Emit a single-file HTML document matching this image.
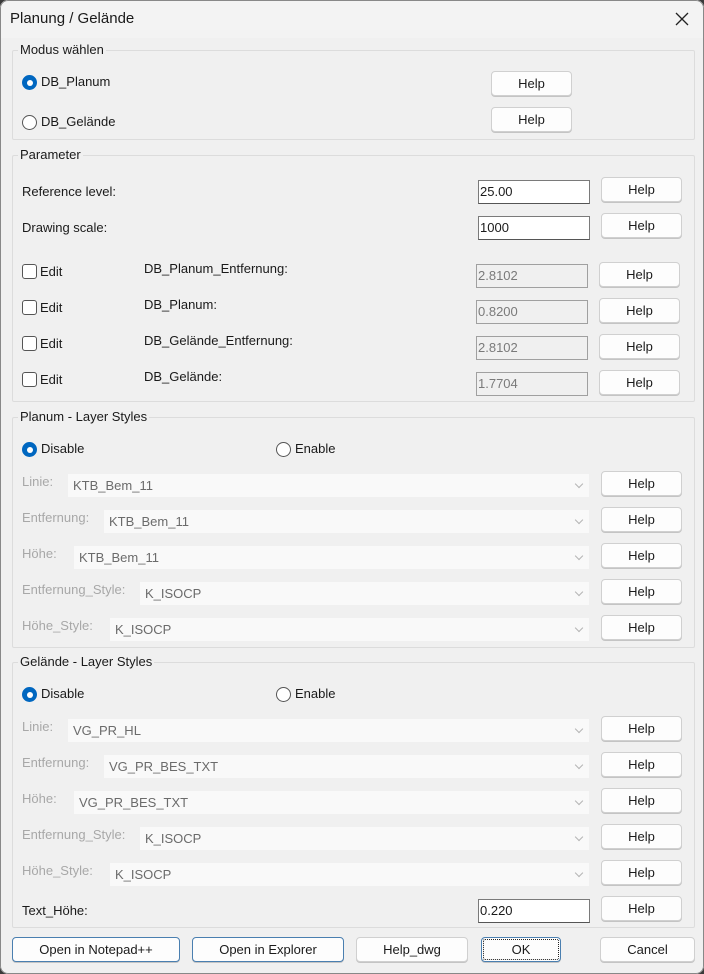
<!DOCTYPE html>
<html><head><meta charset="utf-8"><style>
*{box-sizing:border-box;margin:0;padding:0}
body{width:704px;height:974px;background:#3a3a3a;font-family:"Liberation Sans",sans-serif;font-size:13px;color:#1a1a1a;overflow:hidden;position:relative}
.win{position:absolute;left:0;top:0;width:704px;height:974px;background:#f0f0f0;border-radius:8px;overflow:hidden}
.frame{position:absolute;left:0;top:0;width:704px;height:974px;border-radius:8px;border:1px solid #888;pointer-events:none}
.a{position:absolute;white-space:nowrap}
.t{line-height:16px;transform:translateY(-8px)}
.grp{position:absolute;border:1px solid #dcdcdc;border-radius:2px}
.gl{position:absolute;background:#f0f0f0;padding:0 2px;line-height:16px;transform:translateY(-8px)}
.btn{position:absolute;background:#fdfdfd;border:1px solid #d0d0d0;border-radius:4px;text-align:center;line-height:23px;width:81px;height:25px;box-shadow:0 1px 0 #c4c4c4}
.in{position:absolute;background:#fff;border:1px solid #7a7a7a;border-bottom:1px solid #555;height:24px;line-height:22px;padding-left:1px;width:112px}
.dis{background:#f0f0f0;border:1px solid #a0a0a0;color:#7a7a7a}
.rad{position:absolute;width:15px;height:15px;border-radius:50%;border:1px solid #555;background:#fff}
.rad.on{background:#0067c0;border-color:#0067c0}
.rad.on:after{content:"";position:absolute;left:3.5px;top:3.5px;width:6px;height:6px;border-radius:50%;background:#fff}
.cb{position:absolute;width:15px;height:15px;border:1px solid #555;border-radius:3px;background:#fff}
.cmb{position:absolute;background:#f9f9f9;height:23px;line-height:23px;padding-left:5px;color:#6b6b6b}
.cmb:after{content:"";position:absolute;right:7px;top:7px;width:5px;height:5px;border-right:1px solid #b5b5b5;border-bottom:1px solid #b5b5b5;transform:rotate(45deg)}
.gr{color:#a8a8a8}
</style></head><body><div class="win">
<div class="a" style="left:0;top:0;width:704px;height:38px;background:#f3f3f3"></div>
<div class="a t" style="left:10px;top:19px;font-size:15px">Planung / Gelände</div>
<svg class="a" style="left:675px;top:12px" width="14" height="14"><path d="M1 1L13 13M13 1L1 13" stroke="#222" stroke-width="1.3"/></svg>

<div class="grp" style="left:12px;top:50px;width:683px;height:90px"></div>
<div class="gl" style="left:18px;top:50px">Modus wählen</div>
<div class="rad on" style="left:22px;top:75px"></div><div class="a t" style="left:41px;top:82px">DB_Planum</div>
<div class="rad" style="left:22px;top:115px"></div><div class="a t" style="left:41px;top:122px">DB_Gelände</div>
<div class="btn" style="left:491px;top:71px">Help</div>
<div class="btn" style="left:491px;top:107px">Help</div>

<div class="grp" style="left:12px;top:155px;width:683px;height:247px"></div>
<div class="gl" style="left:18px;top:155px">Parameter</div>
<div class="a t" style="left:22px;top:192px">Reference level:</div>
<div class="in" style="left:478px;top:180px">25.00</div>
<div class="btn" style="left:601px;top:177px">Help</div>
<div class="a t" style="left:22px;top:228px">Drawing scale:</div>
<div class="in" style="left:478px;top:216px">1000</div>
<div class="btn" style="left:601px;top:213px">Help</div>

<div class="cb" style="left:22px;top:264px"></div><div class="a t" style="left:40px;top:272px">Edit</div><div class="a t" style="left:144px;top:269px">DB_Planum_Entfernung:</div><div class="in dis" style="left:476px;top:264px">2.8102</div><div class="btn" style="left:599px;top:262px">Help</div>
<div class="cb" style="left:22px;top:300px"></div><div class="a t" style="left:40px;top:308px">Edit</div><div class="a t" style="left:144px;top:305px">DB_Planum:</div><div class="in dis" style="left:476px;top:300px">0.8200</div><div class="btn" style="left:599px;top:298px">Help</div>
<div class="cb" style="left:22px;top:336px"></div><div class="a t" style="left:40px;top:344px">Edit</div><div class="a t" style="left:144px;top:341px">DB_Gelände_Entfernung:</div><div class="in dis" style="left:476px;top:336px">2.8102</div><div class="btn" style="left:599px;top:334px">Help</div>
<div class="cb" style="left:22px;top:372px"></div><div class="a t" style="left:40px;top:380px">Edit</div><div class="a t" style="left:144px;top:377px">DB_Gelände:</div><div class="in dis" style="left:476px;top:372px">1.7704</div><div class="btn" style="left:599px;top:370px">Help</div>

<div class="grp" style="left:12px;top:417px;width:683px;height:231px"></div>
<div class="gl" style="left:18px;top:417px">Planum - Layer Styles</div>
<div class="rad on" style="left:22px;top:442px"></div><div class="a t" style="left:41px;top:449px">Disable</div>
<div class="rad" style="left:276px;top:442px"></div><div class="a t" style="left:295px;top:449px">Enable</div>
<div class="a t gr" style="left:22px;top:482px">Linie:</div><div class="cmb" style="left:68px;top:474px;width:521px">KTB_Bem_11</div><div class="btn" style="left:601px;top:471px">Help</div>
<div class="a t gr" style="left:22px;top:518px">Entfernung:</div><div class="cmb" style="left:104px;top:510px;width:485px">KTB_Bem_11</div><div class="btn" style="left:601px;top:507px">Help</div>
<div class="a t gr" style="left:22px;top:554px">Höhe:</div><div class="cmb" style="left:74px;top:546px;width:515px">KTB_Bem_11</div><div class="btn" style="left:601px;top:543px">Help</div>
<div class="a t gr" style="left:22px;top:590px">Entfernung_Style:</div><div class="cmb" style="left:140px;top:582px;width:449px">K_ISOCP</div><div class="btn" style="left:601px;top:579px">Help</div>
<div class="a t gr" style="left:22px;top:626px">Höhe_Style:</div><div class="cmb" style="left:110px;top:618px;width:479px">K_ISOCP</div><div class="btn" style="left:601px;top:615px">Help</div>

<div class="grp" style="left:12px;top:662px;width:683px;height:266px"></div>
<div class="gl" style="left:18px;top:662px">Gelände - Layer Styles</div>
<div class="rad on" style="left:22px;top:687px"></div><div class="a t" style="left:41px;top:694px">Disable</div>
<div class="rad" style="left:276px;top:687px"></div><div class="a t" style="left:295px;top:694px">Enable</div>
<div class="a t gr" style="left:22px;top:727px">Linie:</div><div class="cmb" style="left:68px;top:719px;width:521px">VG_PR_HL</div><div class="btn" style="left:601px;top:716px">Help</div>
<div class="a t gr" style="left:22px;top:763px">Entfernung:</div><div class="cmb" style="left:104px;top:755px;width:485px">VG_PR_BES_TXT</div><div class="btn" style="left:601px;top:752px">Help</div>
<div class="a t gr" style="left:22px;top:799px">Höhe:</div><div class="cmb" style="left:74px;top:791px;width:515px">VG_PR_BES_TXT</div><div class="btn" style="left:601px;top:788px">Help</div>
<div class="a t gr" style="left:22px;top:835px">Entfernung_Style:</div><div class="cmb" style="left:140px;top:827px;width:449px">K_ISOCP</div><div class="btn" style="left:601px;top:824px">Help</div>
<div class="a t gr" style="left:22px;top:871px">Höhe_Style:</div><div class="cmb" style="left:110px;top:863px;width:479px">K_ISOCP</div><div class="btn" style="left:601px;top:860px">Help</div>
<div class="a t" style="left:22px;top:911px">Text_Höhe:</div>
<div class="in" style="left:478px;top:899px">0.220</div>
<div class="btn" style="left:601px;top:896px">Help</div>

<div class="btn" style="left:12px;top:937px;width:168px;border-color:#4a7fb0">Open in Notepad++</div>
<div class="btn" style="left:192px;top:937px;width:152px;border-color:#4a7fb0">Open in Explorer</div>
<div class="btn" style="left:356px;top:937px;width:112px">Help_dwg</div>
<div class="btn" style="left:481px;top:937px;width:80px;border-color:#4a7fb0;outline:1px dotted #222;outline-offset:-3px">OK</div>
<div class="btn" style="left:600px;top:937px;width:95px">Cancel</div>
<div class="frame"></div>
</div></body></html>
